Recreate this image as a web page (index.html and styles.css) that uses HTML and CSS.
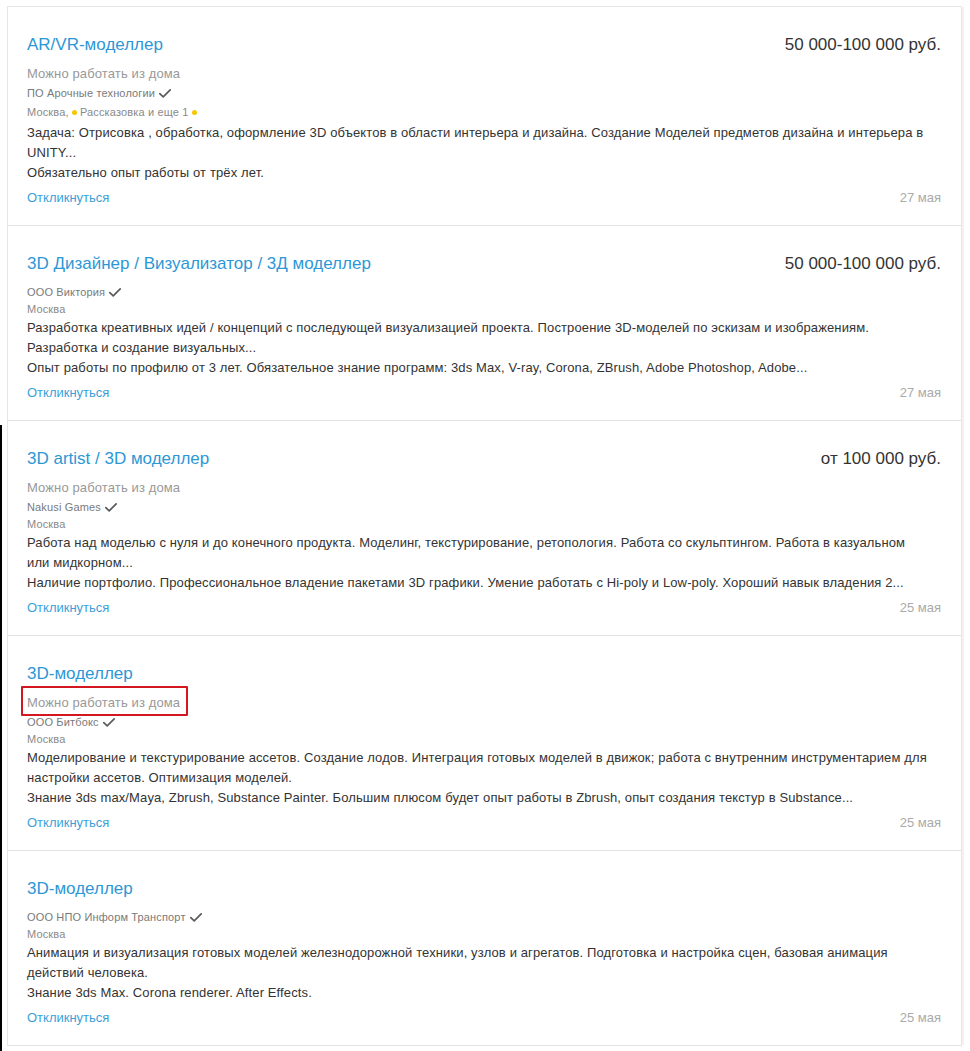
FILE: index.html
```html
<!DOCTYPE html>
<html lang="ru">
<head>
<meta charset="utf-8">
<title>Вакансии</title>
<link rel="stylesheet" href="styles.css">
</head>
<body>
<div class="list">

  <div class="card">
    <div class="head">
      <a class="title">AR/VR-моделлер</a>
      <span class="salary">50 000-100 000 руб.</span>
    </div>
    <div class="remote">Можно работать из дома</div>
    <div class="company">ПО Арочные технологии <svg class="check" viewBox="0 0 12 9" width="12" height="9"><path d="M0.8 4.6 L4.2 7.8 L11.2 0.9"/></svg></div>
    <div class="city city--metro">Москва, <span class="dot"></span>Рассказовка и еще 1 <span class="dot"></span></div>
    <div class="desc">Задача: Отрисовка , обработка, оформление 3D объектов в области интерьера и дизайна. Создание Моделей предметов дизайна и интерьера в UNITY...</div>
    <div class="desc">Обязательно опыт работы от трёх лет.</div>
    <div class="foot">
      <a class="respond">Откликнуться</a>
      <span class="date">27 мая</span>
    </div>
  </div>

  <div class="card">
    <div class="head">
      <a class="title">3D Дизайнер / Визуализатор / 3Д моделлер</a>
      <span class="salary">50 000-100 000 руб.</span>
    </div>
    <div class="company">ООО Виктория <svg class="check" viewBox="0 0 12 9" width="12" height="9"><path d="M0.8 4.6 L4.2 7.8 L11.2 0.9"/></svg></div>
    <div class="city">Москва</div>
    <div class="desc">Разработка креативных идей / концепций с последующей визуализацией проекта. Построение 3D-моделей по эскизам и изображениям. Разработка и создание визуальных...</div>
    <div class="desc">Опыт работы по профилю от 3 лет. Обязательное знание программ: 3ds Max, V-ray, Corona, ZBrush, Adobe Photoshop, Adobe...</div>
    <div class="foot">
      <a class="respond">Откликнуться</a>
      <span class="date">27 мая</span>
    </div>
  </div>

  <div class="card">
    <div class="head">
      <a class="title">3D artist / 3D моделлер</a>
      <span class="salary">от 100 000 руб.</span>
    </div>
    <div class="remote">Можно работать из дома</div>
    <div class="company">Nakusi Games <svg class="check" viewBox="0 0 12 9" width="12" height="9"><path d="M0.8 4.6 L4.2 7.8 L11.2 0.9"/></svg></div>
    <div class="city">Москва</div>
    <div class="desc">Работа над моделью с нуля и до конечного продукта. Моделинг, текстурирование, ретопология. Работа со скульптингом. Работа в казуальном или мидкорном...</div>
    <div class="desc">Наличие портфолио. Профессиональное владение пакетами 3D графики. Умение работать с Hi-poly и Low-poly. Хороший навык владения 2...</div>
    <div class="foot">
      <a class="respond">Откликнуться</a>
      <span class="date">25 мая</span>
    </div>
  </div>

  <div class="card">
    <div class="head">
      <a class="title">3D-моделлер</a>
    </div>
    <div class="remote"><span class="marked">Можно работать из дома</span></div>
    <div class="company">ООО Битбокс <svg class="check" viewBox="0 0 12 9" width="12" height="9"><path d="M0.8 4.6 L4.2 7.8 L11.2 0.9"/></svg></div>
    <div class="city">Москва</div>
    <div class="desc">Моделирование и текстурирование ассетов. Создание лодов. Интеграция готовых моделей в движок; работа с внутренним инструментарием для настройки ассетов. Оптимизация моделей.</div>
    <div class="desc">Знание 3ds max/Maya, Zbrush, Substance Painter. Большим плюсом будет опыт работы в Zbrush, опыт создания текстур в Substance...</div>
    <div class="foot">
      <a class="respond">Откликнуться</a>
      <span class="date">25 мая</span>
    </div>
  </div>

  <div class="card">
    <div class="head">
      <a class="title">3D-моделлер</a>
    </div>
    <div class="company">ООО НПО Информ Транспорт <svg class="check" viewBox="0 0 12 9" width="12" height="9"><path d="M0.8 4.6 L4.2 7.8 L11.2 0.9"/></svg></div>
    <div class="city">Москва</div>
    <div class="desc">Анимация и визуализация готовых моделей железнодорожной техники, узлов и агрегатов. Подготовка и настройка сцен, базовая анимация действий человека.</div>
    <div class="desc">Знание 3ds Max. Corona renderer. After Effects.</div>
    <div class="foot">
      <a class="respond">Откликнуться</a>
      <span class="date">25 мая</span>
    </div>
  </div>

</div>
</body>
</html>
```
FILE: styles.css
```css
html, body {
  margin: 0;
  padding: 0;
}

body {
  background: #fff linear-gradient(#000, #000) 0 425px / 2px 100% no-repeat;
  font-family: "Liberation Sans", Arial, sans-serif;
  color: #333;
  min-height: 1051px;
}

.list {
  margin: 6px 8px 0 7px;
  border: 1px solid #e6e6e6;
  border-bottom: none;
  box-shadow: 3px 0 0 -1px #f2f2f2;
}

.card {
  padding: 28px 20px 17px 19px;
  border-bottom: 1px solid #e3e3e3;
}

.head {
  display: flex;
  justify-content: space-between;
  align-items: baseline;
  margin-bottom: 9px;
}

.title {
  font-size: 17px;
  line-height: 20px;
  color: #2d97d6;
  cursor: pointer;
}

.salary {
  font-size: 17px;
  line-height: 20px;
  color: #333;
}

.remote {
  font-size: 13px;
  line-height: 20px;
  letter-spacing: 0.12px;
  color: #999;
}

.marked {
  display: inline-block;
  position: relative;
}

.marked::after {
  content: "";
  position: absolute;
  top: -7px;
  right: -8px;
  bottom: -3px;
  left: -6px;
  border: 2.5px solid #d3161f;
  border-radius: 1px;
}

.company {
  font-size: 11px;
  line-height: 18px;
  letter-spacing: 0.15px;
  color: #7a7a7a;
  display: flex;
  align-items: center;
  gap: 4px;
}

.check {
  fill: none;
  stroke: #5a5a5a;
  stroke-width: 1.7;
  stroke-linecap: round;
  stroke-linejoin: round;
}

.city {
  font-size: 11px;
  line-height: 17px;
  letter-spacing: 0.15px;
  color: #8a8a8a;
}

.city--metro {
  line-height: 21px;
}

.dot {
  display: inline-block;
  width: 5px;
  height: 5px;
  border-radius: 50%;
  background: #f7c600;
  margin: 0 3px 1px 0;
  vertical-align: middle;
}

.desc {
  font-size: 13px;
  line-height: 20px;
  letter-spacing: 0.12px;
  color: #333;
  max-width: 901px;
}

.foot {
  display: flex;
  justify-content: space-between;
  align-items: baseline;
  margin-top: 5px;
}

.respond {
  font-size: 13px;
  line-height: 20px;
  color: #3c9fd9;
  cursor: pointer;
}

.date {
  font-size: 13px;
  line-height: 20px;
  color: #aaa;
}
```
